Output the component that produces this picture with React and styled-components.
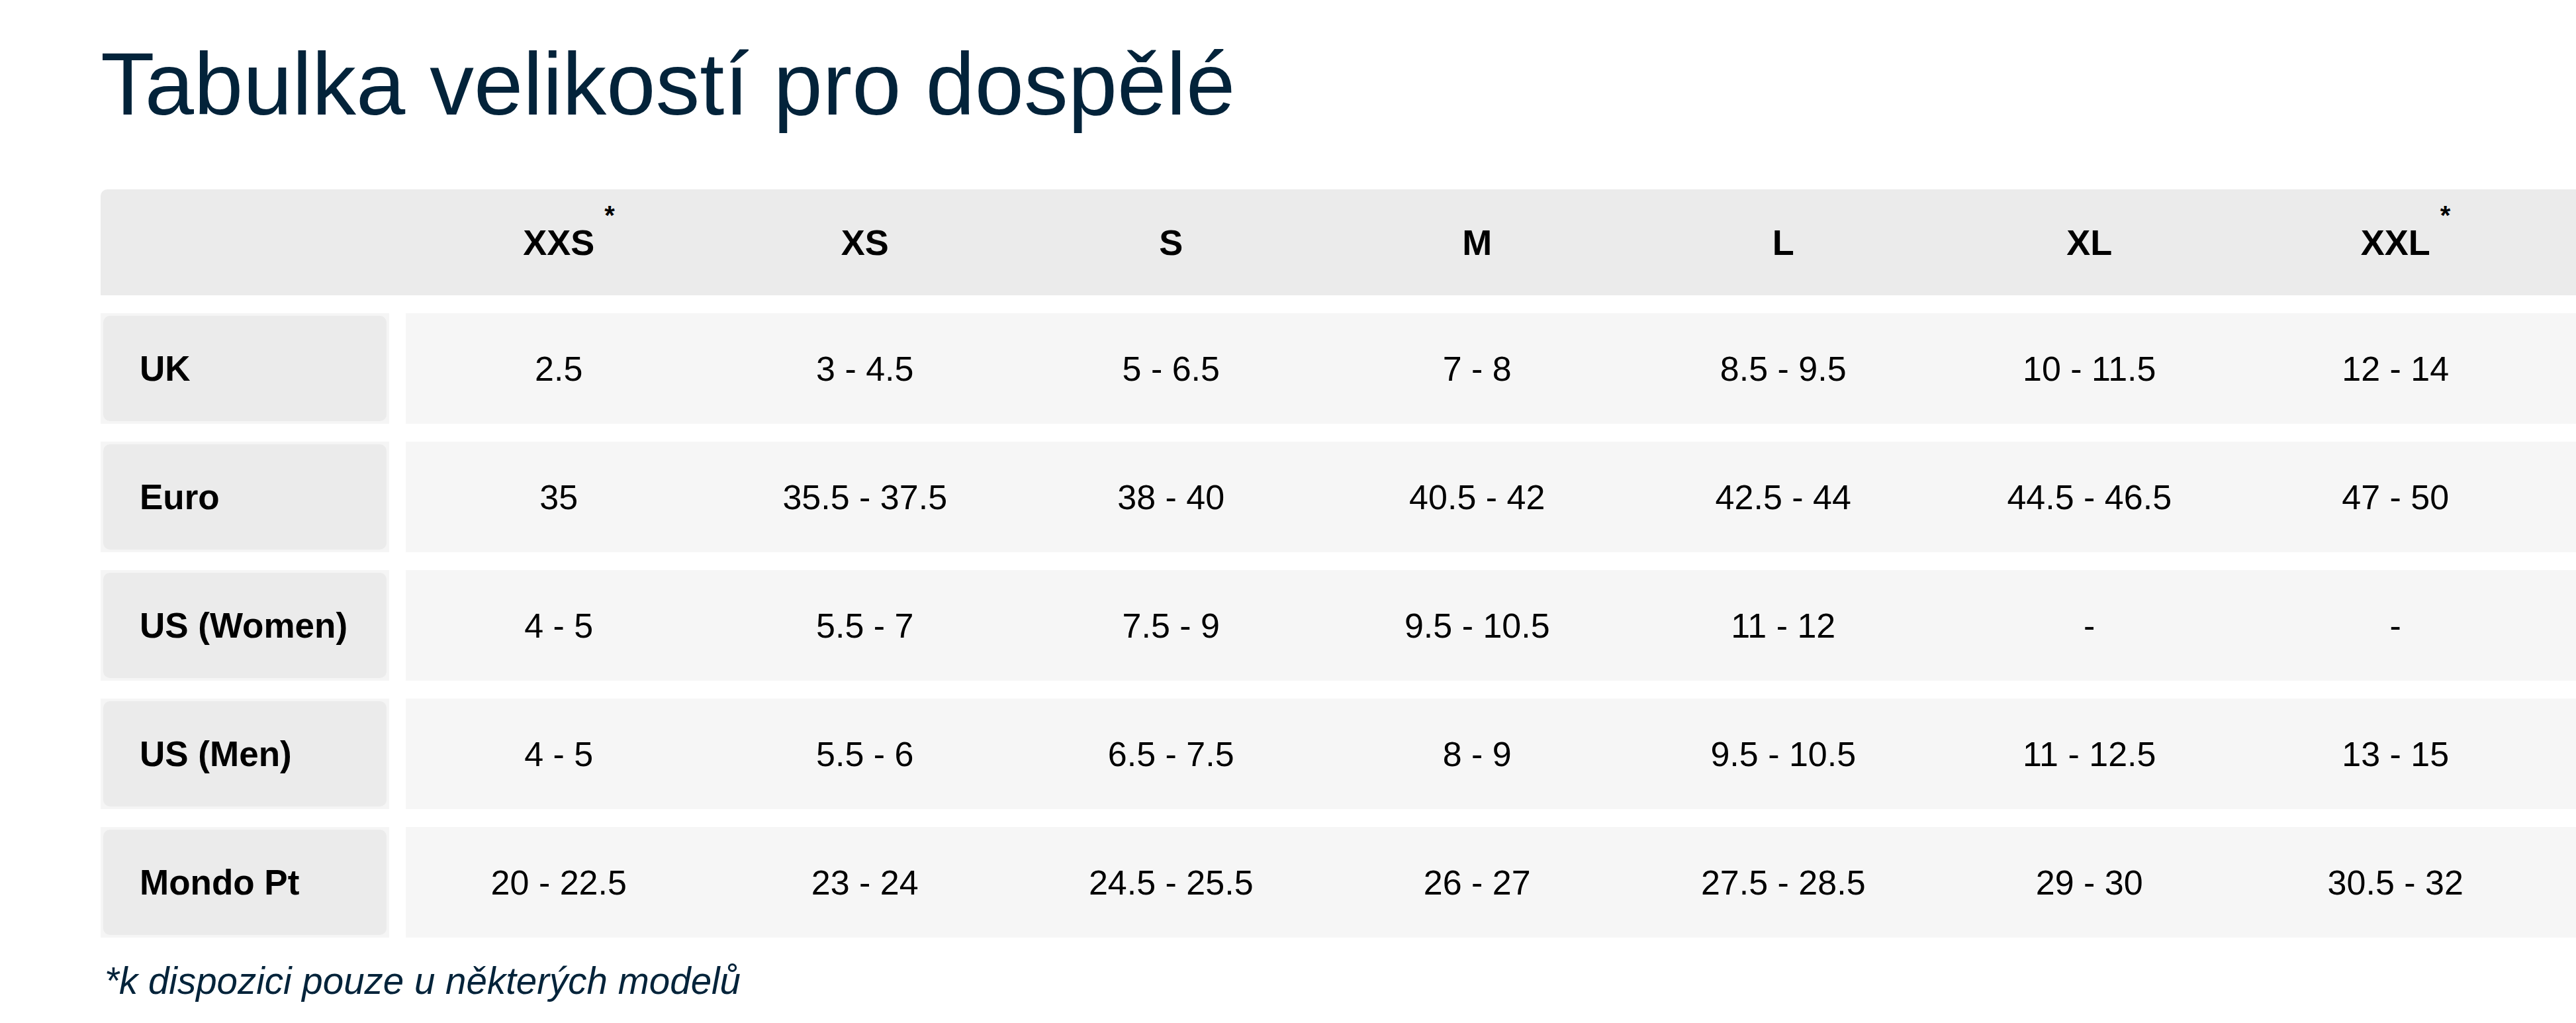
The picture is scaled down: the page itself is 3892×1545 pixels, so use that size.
import styled, { createGlobalStyle } from "styled-components"

const Global = createGlobalStyle`
    html, body {
        margin: 0;
        padding: 0;
        background: #fff;
    }
    body {
        font-family: "Liberation Sans", Arial, sans-serif;
    }
`

const Page = styled.div`
    padding: 61px 0 40px 152px;
`

const Title = styled.h1`
    margin: 0 0 93px 0;
    font-size: 133.5px;
    line-height: 132px;
    font-weight: 400;
    color: #03233a;
    white-space: nowrap;
`

const Table = styled.div`
    display: flex;
    flex-direction: column;
    gap: 27px;
`

const Head = styled.div`
    display: flex;
    height: 160px;
    background: #ebebeb;
    border-top-left-radius: 10px;
`

const Spacer = styled.div`
    width: 461px;
    flex-shrink: 0;
`

const Cols = styled.div`
    display: grid;
    grid-template-columns: repeat(7, 462.5px);
    align-items: center;
`

const HeadCell = styled.div`
    display: flex;
    justify-content: center;
    align-items: center;
    font-size: 54px;
    font-weight: 700;
    color: #000;
`

const Size = styled.span`
    position: relative;
`

const Star = styled.span`
    position: absolute;
    left: calc(100% + 15px);
    top: -32px;
    font-size: 40px;
    font-weight: 700;
`

const Row = styled.div`
    display: flex;
    height: 167px;
    gap: 25px;
`

const Label = styled.div`
    width: 436px;
    flex-shrink: 0;
    box-sizing: border-box;
    padding: 4px 4px;
    background: #f5f5f5;
`

const LabelInner = styled.div`
    height: 100%;
    display: flex;
    align-items: center;
    padding-left: 55px;
    background: #ebebeb;
    border-radius: 10px;
    font-size: 53px;
    font-weight: 700;
    color: #000;
`

const Data = styled(Cols)`
    flex: 1;
    background: #f6f6f6;
`

const Value = styled.div`
    text-align: center;
    font-size: 52px;
    color: #000;
`

const Note = styled.p`
    margin: 38px 0 0 6px;
    font-size: 56.5px;
    line-height: 55px;
    font-style: italic;
    color: #03233a;
`

const sizes = [
    { name: "XXS", star: true },
    { name: "XS" },
    { name: "S" },
    { name: "M" },
    { name: "L" },
    { name: "XL" },
    { name: "XXL", star: true },
]

const rows = [
    { label: "UK", values: ["2.5", "3 - 4.5", "5 - 6.5", "7 - 8", "8.5 - 9.5", "10 - 11.5", "12 - 14"] },
    { label: "Euro", values: ["35", "35.5 - 37.5", "38 - 40", "40.5 - 42", "42.5 - 44", "44.5 - 46.5", "47 - 50"] },
    { label: "US (Women)", values: ["4 - 5", "5.5 - 7", "7.5 - 9", "9.5 - 10.5", "11 - 12", "-", "-"] },
    { label: "US (Men)", values: ["4 - 5", "5.5 - 6", "6.5 - 7.5", "8 - 9", "9.5 - 10.5", "11 - 12.5", "13 - 15"] },
    { label: "Mondo Pt", values: ["20 - 22.5", "23 - 24", "24.5 - 25.5", "26 - 27", "27.5 - 28.5", "29 - 30", "30.5 - 32"] },
]

const App = () => {
    return (
        <Page>
            <Global />
            <Title>Tabulka velikostí pro dospělé</Title>
            <Table>
                <Head>
                    <Spacer />
                    <Cols>
                        {sizes.map((s) => (
                            <HeadCell key={s.name}>
                                <Size>
                                    {s.name}
                                    {s.star && <Star>*</Star>}
                                </Size>
                            </HeadCell>
                        ))}
                    </Cols>
                </Head>
                {rows.map((r) => (
                    <Row key={r.label}>
                        <Label>
                            <LabelInner>{r.label}</LabelInner>
                        </Label>
                        <Data>
                            {r.values.map((v, i) => (
                                <Value key={i}>{v}</Value>
                            ))}
                        </Data>
                    </Row>
                ))}
            </Table>
            <Note>*k dispozici pouze u některých modelů</Note>
        </Page>
    )
}

export default App
